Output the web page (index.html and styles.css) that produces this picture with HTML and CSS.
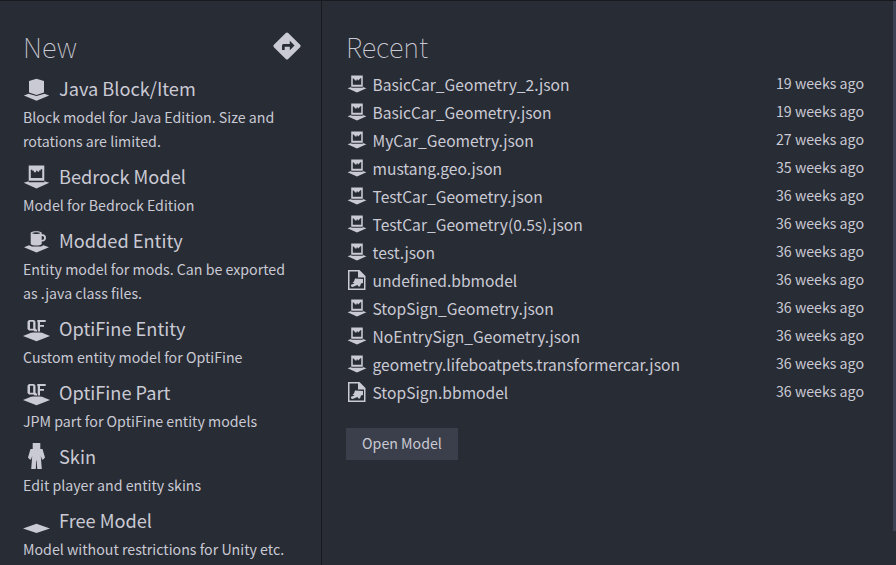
FILE: index.html
```html
<!DOCTYPE html>
<html lang="en">
<head>
<meta charset="utf-8">
<title>Start</title>
<link rel="stylesheet" href="styles.css">
</head>
<body>
<svg class="defs" aria-hidden="true">
  <symbol id="plate" viewBox="0 0 27 26"><path d="M0 20.500L13.500 15.700L27 20.500L13.500 25Z"/></symbol>
  <symbol id="java" viewBox="0 0 27 26"><path d="M.8 19.500L5.500 17.700L13.500 20L21.500 17.700L26.200 19.500L13.500 24.800Z"/><path d="M13.500 2.700L21 5V16.500L13.500 18.900L6 16.500V5Z"/></symbol>
  <symbol id="bedrock" viewBox="0.500 1 26 24"><path d="M1.200 18.500L6 17V18H21V17L25.800 18.500L13.500 24Z"/><path fill-rule="evenodd" d="M6 2H21V16.500H6ZM8 6V14H19V5.500H17.500V6.800H16V8H14.500V7H13V8.500H11V7H9.500V6Z"/></symbol>
  <symbol id="modded" viewBox="0 0 27 26"><path d="M1 19.300L6 17.300L9 18.600H18L20.500 17.300L26 19.300L13.500 24.500Z"/><path fill-rule="evenodd" d="M7.700 4.800C7.700 2.700 18.700 2.700 18.700 4.800V6.300C24.500 5.300 24.500 14 18.700 13.500V16C17.500 18 9 18 7.700 16ZM18.700 8V12C22 12 22 7.600 18.700 8ZM9 5C10.500 6.300 16 6.300 17.500 5C15 4 11.500 4 9 5Z"/></symbol>
  <symbol id="optifine" viewBox="0 0 27 26"><path d="M0 20L13.500 14.500L27 20L13.500 25.200Z"/><path class="cut" d="M4 3H23V11H18.500V16.500H10L4 16Z"/><path fill-rule="evenodd" d="M6 4H11L12.500 5.500V12.500L14 14V15.500H11.500L10.500 14.500H6L4.500 13V5.500ZM7 5.800V12.700H10.200V5.800ZM14.300 4H22.700V5.900H17V9H21V10.800H17V15.500H14.700V5.900H14.300Z"/></symbol>
  <symbol id="skin" viewBox="0 0 27 26"><path d="M9.700 0H17.300V6H19.500L22 14.500L20.200 16.500H19L17.800 13L18.800 26H14.200L13.700 17.500H13.300L12.800 26H8.200L9.200 13L8 16.500H6.800L5 14.500L7.500 6H9.700Z"/></symbol>
  <symbol id="bbmodel" viewBox="0 0 20 22"><path fill-rule="evenodd" d="M1 1H12.500L18.500 7V21H1ZM2.500 2.500V19.500H17V8.500H11V2.500Z"/><path d="M12.500 3V7.300H16.800Z"/><path d="M8 9.500L16 10V14L14 14.500L13 17.500H11.500L10.500 16L5.500 18L4 17.300V15.700L7.500 14.500L5.500 13.500L7 12.500Z"/></symbol>
</svg>
<main class="start-screen">
  <section class="new">
    <header class="section-head">
      <h1>New</h1>
      <svg class="direction" viewBox="0 0 28 28"><path fill-rule="evenodd" d="M12.800 .9Q14 -.1 15.200 .9L27.100 12.800Q28.100 14 27.100 15.200L15.200 27.100Q14 28.100 12.800 27.100L.9 15.200Q-.1 14 .9 12.800ZM16.800 8.800V12H10.500Q9 12 9 13.500V18H11.700V14.700H16.800V18.200L21.500 13.500Z"/></svg>
    </header>
    <article class="format"><h2><svg><use href="#java"/></svg><span>Java Block/Item</span></h2><p>Block model for Java Edition. Size and rotations are limited.</p></article>
    <article class="format"><h2><svg><use href="#bedrock"/></svg><span>Bedrock Model</span></h2><p>Model for Bedrock Edition</p></article>
    <article class="format"><h2><svg><use href="#modded"/></svg><span>Modded Entity</span></h2><p>Entity model for mods. Can be exported as .java class files.</p></article>
    <article class="format"><h2><svg><use href="#optifine"/></svg><span>OptiFine Entity</span></h2><p>Custom entity model for OptiFine</p></article>
    <article class="format"><h2><svg><use href="#optifine"/></svg><span>OptiFine Part</span></h2><p>JPM part for OptiFine entity models</p></article>
    <article class="format"><h2><svg class="raised"><use href="#skin"/></svg><span>Skin</span></h2><p>Edit player and entity skins</p></article>
    <article class="format"><h2><svg><use href="#plate"/></svg><span>Free Model</span></h2><p>Model without restrictions for Unity etc.</p></article>
  </section>
  <section class="recent">
    <h1>Recent</h1>
    <ul>
      <li><svg><use href="#bedrock"/></svg><span>BasicCar_Geometry_2.json</span><time>19 weeks ago</time></li>
      <li><svg><use href="#bedrock"/></svg><span>BasicCar_Geometry.json</span><time>19 weeks ago</time></li>
      <li><svg><use href="#bedrock"/></svg><span>MyCar_Geometry.json</span><time>27 weeks ago</time></li>
      <li><svg><use href="#bedrock"/></svg><span>mustang.geo.json</span><time>35 weeks ago</time></li>
      <li><svg><use href="#bedrock"/></svg><span>TestCar_Geometry.json</span><time>36 weeks ago</time></li>
      <li><svg><use href="#bedrock"/></svg><span>TestCar_Geometry(0.5s).json</span><time>36 weeks ago</time></li>
      <li><svg><use href="#bedrock"/></svg><span>test.json</span><time>36 weeks ago</time></li>
      <li><svg><use href="#bbmodel"/></svg><span>undefined.bbmodel</span><time>36 weeks ago</time></li>
      <li><svg><use href="#bedrock"/></svg><span>StopSign_Geometry.json</span><time>36 weeks ago</time></li>
      <li><svg><use href="#bedrock"/></svg><span>NoEntrySign_Geometry.json</span><time>36 weeks ago</time></li>
      <li><svg><use href="#bedrock"/></svg><span>geometry.lifeboatpets.transformercar.json</span><time>36 weeks ago</time></li>
      <li><svg><use href="#bbmodel"/></svg><span>StopSign.bbmodel</span><time>36 weeks ago</time></li>
    </ul>
    <button>Open Model</button>
  </section>
  <div class="scrollbar"><div class="thumb"></div></div>
</main>
</body>
</html>
```

FILE: styles.css
```css
* { box-sizing: border-box; }
body, h1, h2, p, ul { margin: 0; padding: 0; }
body {
  background: #282c34;
  color: #cacad4;
  font-family: "Noto Sans CJK SC", sans-serif;
  font-size: 14.2px;
  overflow: hidden;
}
svg { fill: currentColor; flex: none; display: block; }
.cut { fill: #282c34; }
.defs { position: absolute; width: 0; height: 0; }
.start-screen {
  display: flex;
  height: 565px;
  border-top: 1px solid #181a1f;
}
.new {
  width: 322px;
  padding: 24px 20.5px 0 23px;
  border-right: 1px solid #181a1f;
}
h1 {
  font-size: 27.2px;
  font-weight: 100;
  line-height: 42px;
  height: 44px;
}
.section-head { display: flex; justify-content: space-between; }
.direction { width: 28px; height: 28px; margin-top: 7px; }
.format h2 {
  display: flex;
  align-items: flex-start;
  gap: 9px;
  height: 36px;
  padding-top: 4px;
  font-size: 18.2px;
  font-weight: 400;
  line-height: 31px;
}
.format h2 svg { width: 27px; height: 26px; margin-top: 3px; }
.format h2 .raised { margin-top: 2px; }
.format p { line-height: 24px; }
.format { padding-bottom: 4px; }
.recent { flex: 1; padding: 24px 29px 0 24px; }
ul { list-style: none; padding-top: 2px; }
li { display: flex; height: 28px; line-height: 27px; font-size: 15.6px; }
li svg { width: 20px; height: 22px; margin: 1.5px 5.5px 0 1px; }
time { margin-left: auto; font-size: 14.2px; line-height: 25px; }
button {
  display: block;
  width: 112px;
  height: 32px;
  margin-top: 21px;
  padding: 0 0 2px;
  border: 0;
  background: #3a3f4b;
  color: inherit;
  font: inherit;
  line-height: 30px;
}
.scrollbar { width: 3px; }
.thumb { height: 530px; background: #3d4254; }
```
